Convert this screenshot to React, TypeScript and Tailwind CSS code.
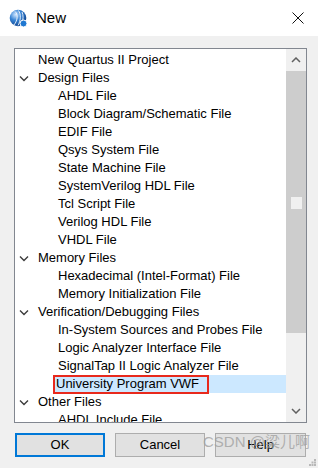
import React from 'react';

type Row = { label: string; level: 0 | 1; group?: boolean; selected?: boolean };

const rows: Row[] = [
    { label: 'New Quartus II Project', level: 0 },
    { label: 'Design Files', level: 0, group: true },
    { label: 'AHDL File', level: 1 },
    { label: 'Block Diagram/Schematic File', level: 1 },
    { label: 'EDIF File', level: 1 },
    { label: 'Qsys System File', level: 1 },
    { label: 'State Machine File', level: 1 },
    { label: 'SystemVerilog HDL File', level: 1 },
    { label: 'Tcl Script File', level: 1 },
    { label: 'Verilog HDL File', level: 1 },
    { label: 'VHDL File', level: 1 },
    { label: 'Memory Files', level: 0, group: true },
    { label: 'Hexadecimal (Intel-Format) File', level: 1 },
    { label: 'Memory Initialization File', level: 1 },
    { label: 'Verification/Debugging Files', level: 0, group: true },
    { label: 'In-System Sources and Probes File', level: 1 },
    { label: 'Logic Analyzer Interface File', level: 1 },
    { label: 'SignalTap II Logic Analyzer File', level: 1 },
    { label: 'University Program VWF', level: 1, selected: true },
    { label: 'Other Files', level: 0, group: true },
    { label: 'AHDL Include File', level: 1 },
];

const Chevron = () => (
    <svg width="10" height="7" viewBox="0 0 10 7" className="shrink-0">
        <path d="M1 1.5 L5 5.5 L9 1.5" fill="none" stroke="#3c3c3c" strokeWidth="1.4" />
    </svg>
);

const AppIcon = () => (
    <svg width="19" height="19" viewBox="0 0 19 19">
        <defs>
            <radialGradient id="g" cx="35%" cy="30%" r="75%">
                <stop offset="0%" stopColor="#cfe6ff" />
                <stop offset="45%" stopColor="#3a86d6" />
                <stop offset="100%" stopColor="#0b3f8a" />
            </radialGradient>
        </defs>
        <circle cx="9" cy="9" r="8.3" fill="url(#g)" />
        <path d="M6 2.5 C9 5 9 11 5 16 M9.5 1.5 C12 5 12 11 9 16.5 M13 3 C14.5 6 14.5 11 12.5 15" fill="none" stroke="#ffffff" strokeWidth="1" opacity="0.85" />
        <circle cx="14.5" cy="14.5" r="3.5" fill="#1f78d1" stroke="#ffffff" strokeWidth="1" />
    </svg>
);

const App: React.FC = () => {
    return (
        <div className="w-[318px] h-[468px] bg-[#f0f0f0] relative overflow-hidden" style={{ fontFamily: '"Liberation Sans", "Noto Sans CJK SC", sans-serif' }}>
            {/* title bar */}
            <div className="h-[36px] bg-white flex items-center pl-[9px]">
                <AppIcon />
                <span className="ml-[8px] text-[15px] text-black">New</span>
                <div className="ml-auto mr-[14px]">
                    <svg width="12" height="12" viewBox="0 0 12 12">
                        <path d="M0.5 0.5 L11.5 11.5 M11.5 0.5 L0.5 11.5" stroke="#111" strokeWidth="1" />
                    </svg>
                </div>
            </div>

            {/* list box */}
            <div className="mt-[12px] ml-[14px] w-[293px] h-[375px] border border-[#828790] bg-white flex">
                <div className="w-[271px] pt-[2px] overflow-hidden text-[13px] text-black whitespace-nowrap">
                    {rows.map((r, i) => (
                        <div key={i} className="h-[18px] flex items-center">
                            {r.level === 0 ? (
                                <div className="flex items-center">
                                    <div className="w-[23px] flex justify-start pl-[4px]">
                                        {r.group && <Chevron />}
                                    </div>
                                    <span>{r.label}</span>
                                </div>
                            ) : r.selected ? (
                                <div className="ml-[40px] flex-1 h-[18px] bg-[#cce8ff] flex items-center">
                                    <span className="h-[19px] border-2 border-[#e8291c] flex items-center pl-[1px] pr-[8px] -ml-[2px]">{r.label}</span>
                                </div>
                            ) : (
                                <span className="ml-[43px]">{r.label}</span>
                            )}
                        </div>
                    ))}
                </div>
                {/* scrollbar */}
                <div className="w-[20px] bg-[#f0f0f0] flex flex-col">
                    <div className="h-[22px] flex items-center justify-center">
                        <svg width="10" height="6" viewBox="0 0 10 6">
                            <path d="M1 5 L5 1 L9 5" fill="none" stroke="#606060" strokeWidth="1.5" />
                        </svg>
                    </div>
                    <div className="h-[262px] bg-[#cdcdcd] flex justify-center pt-[126px]">
                        <div className="w-[11px] h-[12px] bg-[#f0f0f0]" />
                    </div>
                    <div className="flex-1" />
                    <div className="h-[22px] flex items-center justify-center">
                        <svg width="10" height="6" viewBox="0 0 10 6">
                            <path d="M1 1 L5 5 L9 1" fill="none" stroke="#606060" strokeWidth="1.5" />
                        </svg>
                    </div>
                </div>
            </div>

            {/* buttons */}
            <div className="mt-[10px] ml-[15px] flex gap-[10px] text-[13px] text-black">
                <button className="w-[90px] h-[24px] bg-[#e1e1e1] border-2 border-[#0078d7]">OK</button>
                <button className="w-[90px] h-[24px] bg-[#e1e1e1] border border-[#adadad]">Cancel</button>
                <button className="w-[91px] h-[24px] bg-[#e1e1e1] border border-[#adadad]">Help</button>
            </div>

            {/* watermark */}
            <div className="absolute left-[203px] top-[433px] text-[15px] leading-[18px] text-[#a0a0a0]/80 whitespace-nowrap">CSDN @粱儿啊</div>

            {/* resize grip */}
            <svg className="absolute right-[2px] bottom-[2px]" width="7" height="7" viewBox="0 0 7 7">
                <rect x="5" y="0" width="2" height="2" fill="#b8b8b8" />
                <rect x="2.5" y="2.5" width="2" height="2" fill="#b8b8b8" />
                <rect x="5" y="2.5" width="2" height="2" fill="#b8b8b8" />
                <rect x="0" y="5" width="2" height="2" fill="#b8b8b8" />
                <rect x="2.5" y="5" width="2" height="2" fill="#b8b8b8" />
                <rect x="5" y="5" width="2" height="2" fill="#b8b8b8" />
            </svg>
        </div>
    );
};

export default App;
